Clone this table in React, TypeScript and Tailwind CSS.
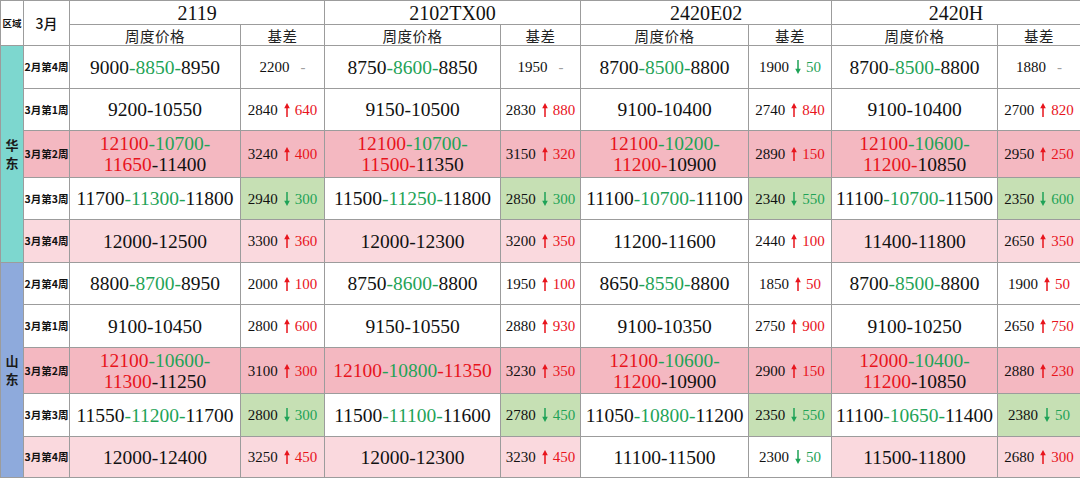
import React from 'react';

type Dir = 'u' | 'd' | 'n';
type CellData = [string, string, string, Dir, string, string];
type RowData = { label: string; lbg: string; cells: CellData[] };

const COLORS: Record<string, string> = {
  k: 'text-[#111111]',
  g: 'text-[#1fa357]',
  r: 'text-[#e8141c]',
};

const BGS: Record<string, string> = {
  w: 'bg-white',
  p: 'bg-[#f4b8c1]',
  l: 'bg-[#fad9de]',
  g: 'bg-[#c6e0b4]',
};

const serif = "font-['Liberation_Serif','Noto_Sans_CJK_SC',serif]";
const cjk = "font-['Noto_Sans_CJK_SC','Noto_Sans',sans-serif]";
const bd = 'border border-[#9c9c9c] text-[10px] leading-[10px]';

const east: RowData[] = [
  {
    label: '2月第4周',
    lbg: 'w',
    cells: [
      ['k:9000|g:-8850-|k:8950', 'w', '2200', 'n', '', 'w'],
      ['k:8750|g:-8600-|k:8850', 'w', '1950', 'n', '', 'w'],
      ['k:8700|g:-8500-|k:8800', 'w', '1900', 'd', '50', 'w'],
      ['k:8700|g:-8500-|k:8800', 'w', '1880', 'n', '', 'w'],
    ],
  },
  {
    label: '3月第1周',
    lbg: 'w',
    cells: [
      ['k:9200-10550', 'w', '2840', 'u', '640', 'w'],
      ['k:9150-10500', 'w', '2830', 'u', '880', 'w'],
      ['k:9100-10400', 'w', '2740', 'u', '840', 'w'],
      ['k:9100-10400', 'w', '2700', 'u', '820', 'w'],
    ],
  },
  {
    label: '3月第2周',
    lbg: 'p',
    cells: [
      ['r:12100|g:-10700-/r:11650|k:-11400', 'p', '3240', 'u', '400', 'p'],
      ['r:12100|g:-10700-/r:11500-|k:11350', 'p', '3150', 'u', '320', 'p'],
      ['r:12100|g:-10200-/r:11200-|k:10900', 'p', '2890', 'u', '150', 'p'],
      ['r:12100|g:-10600-/r:11200-|k:10850', 'p', '2950', 'u', '250', 'p'],
    ],
  },
  {
    label: '3月第3周',
    lbg: 'w',
    cells: [
      ['k:11700|g:-11300-|k:11800', 'w', '2940', 'd', '300', 'g'],
      ['k:11500|g:-11250-|k:11800', 'w', '2850', 'd', '300', 'g'],
      ['k:11100|g:-10700-|k:11100', 'w', '2340', 'd', '550', 'g'],
      ['k:11100|g:-10700-|k:11500', 'w', '2350', 'd', '600', 'g'],
    ],
  },
  {
    label: '3月第4周',
    lbg: 'l',
    cells: [
      ['k:12000-12500', 'l', '3300', 'u', '360', 'l'],
      ['k:12000-12300', 'l', '3200', 'u', '350', 'l'],
      ['k:11200-11600', 'w', '2440', 'u', '100', 'w'],
      ['k:11400-11800', 'l', '2650', 'u', '350', 'l'],
    ],
  },
];

const shandong: RowData[] = [
  {
    label: '2月第4周',
    lbg: 'w',
    cells: [
      ['k:8800|g:-8700-|k:8950', 'w', '2000', 'u', '100', 'w'],
      ['k:8750|g:-8600-|k:8800', 'w', '1950', 'u', '100', 'w'],
      ['k:8650|g:-8550-|k:8800', 'w', '1850', 'u', '50', 'w'],
      ['k:8700|g:-8500-|k:8800', 'w', '1900', 'u', '50', 'w'],
    ],
  },
  {
    label: '3月第1周',
    lbg: 'w',
    cells: [
      ['k:9100-10450', 'w', '2800', 'u', '600', 'w'],
      ['k:9150-10550', 'w', '2880', 'u', '930', 'w'],
      ['k:9100-10350', 'w', '2750', 'u', '900', 'w'],
      ['k:9100-10250', 'w', '2650', 'u', '750', 'w'],
    ],
  },
  {
    label: '3月第2周',
    lbg: 'p',
    cells: [
      ['r:12100|g:-10600-/r:11300|k:-11250', 'p', '3100', 'u', '300', 'p'],
      ['r:12100|g:-10800|r:-11350', 'p', '3230', 'u', '350', 'p'],
      ['r:12100|g:-10600-/r:11200|k:-10900', 'p', '2900', 'u', '150', 'p'],
      ['r:12000|g:-10400-/r:11200|k:-10850', 'p', '2880', 'u', '230', 'p'],
    ],
  },
  {
    label: '3月第3周',
    lbg: 'w',
    cells: [
      ['k:11550|g:-11200-|k:11700', 'w', '2800', 'd', '300', 'g'],
      ['k:11500|g:-11100-|k:11600', 'w', '2780', 'd', '450', 'g'],
      ['k:11050|g:-10800-|k:11200', 'w', '2350', 'd', '550', 'g'],
      ['k:11100|g:-10650-|k:11400', 'w', '2380', 'd', '50', 'g'],
    ],
  },
  {
    label: '3月第4周',
    lbg: 'l',
    cells: [
      ['k:12000-12400', 'l', '3250', 'u', '450', 'l'],
      ['k:12000-12300', 'l', '3230', 'u', '450', 'l'],
      ['k:11100-11500', 'w', '2300', 'd', '50', 'w'],
      ['k:11500-11800', 'l', '2680', 'u', '300', 'l'],
    ],
  },
];

const eastHeights = ['h-[43px]', 'h-[42px]', 'h-[47px]', 'h-[42px]', 'h-[43px]'];
const sdHeights = ['h-[42px]', 'h-[43px]', 'h-[46px]', 'h-[43px]', 'h-[41px]'];

function Arrow({ dir }: { dir: 'u' | 'd' }) {
  const fill = dir === 'u' ? '#e8141c' : '#1fa357';
  return (
    <svg width="6" height="14" viewBox="0 0 6 14" className="block">
      {dir === 'u' ? (
        <g fill={fill}>
          <path d="M3 0 L5.8 5.2 L0.2 5.2 Z" />
          <rect x="2.25" y="4.5" width="1.5" height="9.5" />
        </g>
      ) : (
        <g fill={fill}>
          <path d="M3 14 L5.8 8.8 L0.2 8.8 Z" />
          <rect x="2.25" y="0" width="1.5" height="9.5" />
        </g>
      )}
    </svg>
  );
}

function Price({ spec }: { spec: string }) {
  const lines = spec.split('/');
  return (
    <div className={`${serif} text-[19.5px] leading-[21px] whitespace-nowrap`}>
      {lines.map((line, i) => (
        <div key={i}>
          {line.split('|').map((seg, j) => {
            const [c, t] = seg.split(':');
            return (
              <span key={j} className={COLORS[c]}>
                {t}
              </span>
            );
          })}
        </div>
      ))}
    </div>
  );
}

function Basis({ b, d, delta }: { b: string; d: Dir; delta: string }) {
  return (
    <div className={`${serif} text-[15px] leading-[18px] flex items-center justify-center whitespace-nowrap`}>
      <span className="text-[#111111]">{b}</span>
      {d === 'n' ? (
        <span className="text-[#a0a0a0] ml-[11px]">-</span>
      ) : (
        <>
          <span className="ml-[6px] mr-[5px] flex items-center">
            <Arrow dir={d} />
          </span>
          <span className={d === 'u' ? 'text-[#e8141c]' : 'text-[#1fa357]'}>{delta}</span>
        </>
      )}
    </div>
  );
}

function Region({ name, rows, heights, bg }: { name: string; rows: RowData[]; heights: string[]; bg: string }) {
  return (
    <>
      {rows.map((row, i) => (
        <tr key={row.label + name} className={heights[i]}>
          {i === 0 && (
            <td rowSpan={5} className={`${bd} ${bg} text-center align-middle p-0`}>
              <div className={`${cjk} text-[13px] font-bold leading-[18px] text-[#1a1a1a]`}>
                <div>{name[0]}</div>
                <div>{name[1]}</div>
              </div>
            </td>
          )}
          <td className={`${bd} ${BGS[row.lbg]} text-center align-middle p-0`}>
            <div className={`${cjk} text-[10.5px] leading-[14px] font-bold text-[#111111] whitespace-nowrap`}>{row.label}</div>
          </td>
          {row.cells.map((c, j) => (
            <React.Fragment key={j}>
              <td className={`${bd} ${BGS[c[1]]} text-center align-middle p-0`}>
                <Price spec={c[0]} />
              </td>
              <td className={`${bd} ${BGS[c[5]]} text-center align-middle p-0`}>
                <Basis b={c[2]} d={c[3]} delta={c[4]} />
              </td>
            </React.Fragment>
          ))}
        </tr>
      ))}
    </>
  );
}

const products = ['2119', '2102TX00', '2420E02', '2420H'];

export default function App() {
  return (
    <div className="w-[1080px] h-[479px] bg-white overflow-hidden">
      <table className="table-fixed border-collapse w-[1080px]">
        <colgroup>
          <col className="w-[23px]" />
          <col className="w-[46px]" />
          <col className="w-[171px]" />
          <col className="w-[84px]" />
          <col className="w-[176px]" />
          <col className="w-[80px]" />
          <col className="w-[168px]" />
          <col className="w-[83px]" />
          <col className="w-[166px]" />
          <col className="w-[83px]" />
        </colgroup>
        <thead>
          <tr className="h-[24px]">
            <th rowSpan={2} className={`${bd} bg-white p-0 align-middle`}>
              <div className={`${cjk} text-[9.5px] leading-[12px] font-bold text-[#111111] whitespace-nowrap`}>区域</div>
            </th>
            <th rowSpan={2} className={`${bd} bg-white p-0 align-middle`}>
              <div className={`${cjk} text-[14px] leading-[16px] font-medium text-[#111111]`}>3月</div>
            </th>
            {products.map((p) => (
              <th key={p} colSpan={2} className={`${bd} bg-white p-0 align-middle font-normal`}>
                <div className={`${serif} text-[20px] leading-[20px] text-[#111111]`}>{p}</div>
              </th>
            ))}
          </tr>
          <tr className="h-[21px]">
            {products.map((p) => (
              <React.Fragment key={p}>
                <th className={`${bd} bg-white p-0 align-middle font-normal`}>
                  <div className={`${cjk} text-[14.5px] leading-[17px] tracking-[0.5px] text-[#222222]`}>周度价格</div>
                </th>
                <th className={`${bd} bg-white p-0 align-middle font-normal`}>
                  <div className={`${cjk} text-[14.5px] leading-[17px] tracking-[0.5px] text-[#222222]`}>基差</div>
                </th>
              </React.Fragment>
            ))}
          </tr>
        </thead>
        <tbody>
          <Region name="华东" rows={east} heights={eastHeights} bg="bg-[#7dd7cf]" />
          <Region name="山东" rows={shandong} heights={sdHeights} bg="bg-[#8eaadc]" />
        </tbody>
      </table>
    </div>
  );
}
